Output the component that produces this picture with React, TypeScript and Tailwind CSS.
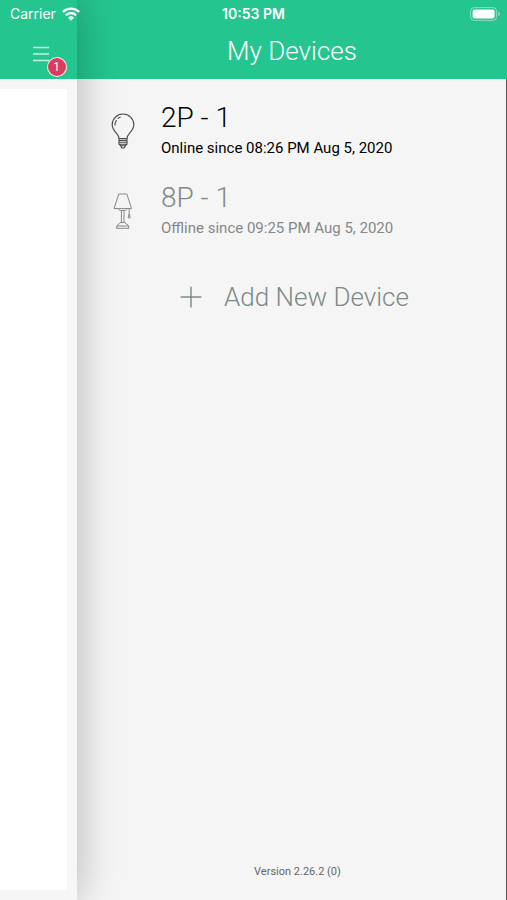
import { Plus } from "lucide-react";

type Device = {
  name: string;
  status: string;
  online: boolean;
  icon: "bulb" | "lamp";
};

const devices: Device[] = [
  { name: "2P - 1", status: "Online since 08:26 PM Aug 5, 2020", online: true, icon: "bulb" },
  { name: "8P - 1", status: "Offline since 09:25 PM Aug 5, 2020", online: false, icon: "lamp" },
];

function BulbIcon() {
  return (
    <svg width="24" height="36" viewBox="0 0 24 36" fill="none" stroke="#4a4a4a" strokeWidth="1.1" aria-hidden="true">
      <path d="M8 25.5C8 20.5 1.2 18.5 1.2 11.8A10.8 10.8 0 0 1 22.8 11.8C22.8 18.5 16 20.5 16 25.5Z" />
      <path d="M4 12.5A8.2 8.2 0 0 1 5.6 7M6.8 5.6A8 8 0 0 1 9.6 4" />
      <path d="M8 25.5v5.7l1.8 1.5h4.4l1.8-1.5v-5.7M8 27.4h8M8 29.3h8M8.4 31.2h7.2" />
      <path d="M10 32.7v1l1 1.3h2l1-1.3v-1" />
    </svg>
  );
}

function LampIcon() {
  return (
    <svg width="24" height="36" viewBox="0 0 24 36" fill="none" stroke="currentColor" strokeWidth="1" strokeLinejoin="round" aria-hidden="true">
      <path d="M7.8 1h8l4.8 14.6H3Z" />
      <path d="M7.5 15.6c.4 1.5 1.5 1.9 2.7 1.9h3c1.2 0 2.3-.4 2.7-1.9" />
      <path d="M10.4 17.5v12M13 17.5v12M9.2 29.5h5" />
      <path d="M9.2 29.5c0 2-3.2 1.4-3.2 3.5h11.4c0-2.1-3.2-1.5-3.2-3.5M6 33l-.6 2.3H18l-.6-2.3" />
      <path d="M18.2 15.6v5.8M17.2 24.8l.6-3.4h.8l.6 3.4Z" />
    </svg>
  );
}

function WifiIcon() {
  return (
    <svg width="18" height="14" viewBox="0 0 18 14" fill="none" stroke="currentColor" strokeWidth="2.3" aria-hidden="true">
      <path d="M0.9 5A11.5 11.5 0 0 1 17.1 5" />
      <path d="M3.9 8.2A7.2 7.2 0 0 1 14.1 8.2" />
      <path d="M9 13.8L6.1 10.8A4.1 4.1 0 0 1 11.9 10.8Z" fill="currentColor" stroke="none" />
    </svg>
  );
}

function BatteryIcon() {
  return (
    <svg width="31" height="14" viewBox="0 0 31 14" fill="none" aria-hidden="true">
      <rect x="0.6" y="0.6" width="26" height="12.8" rx="3.6" stroke="white" strokeOpacity="0.45" />
      <rect x="2.6" y="2.6" width="22" height="8.8" rx="1.8" fill="white" />
      <path d="M28.2 4.8v4.4c.9-.4 1.6-1.2 1.6-2.2s-.7-1.8-1.6-2.2Z" fill="white" fillOpacity="0.5" />
    </svg>
  );
}

function StatusBar() {
  return (
    <div className="absolute inset-x-0 top-0 z-20 grid h-7 grid-cols-3 items-center px-1.5 font-['Inter',sans-serif] text-sm text-white">
      <div className="flex items-center gap-1.5 pl-1">
        <span>Carrier</span>
        <WifiIcon />
      </div>
      <span className="text-center font-semibold">10:53 PM</span>
      <div className="flex justify-end">
        <BatteryIcon />
      </div>
    </div>
  );
}

function MainPanel() {
  return (
    <section className="z-10 flex w-[77px] shrink-0 flex-col bg-[#f6f6f6] shadow-[0_0_44px_rgba(0,0,0,0.28)]">
      <header className="flex h-[79px] items-end justify-center bg-[#25c58f] pb-4 pl-1">
        <button type="button" aria-label="Menu, 1 notification" className="relative text-white/75">
          <svg width="16" height="18" viewBox="0 0 16 18" stroke="currentColor" strokeWidth="1.5" aria-hidden="true">
            <path d="M0 2.5h16M0 9h16M0 15.5h16" />
          </svg>
          <span className="absolute top-3 left-3.5 flex size-5 items-center justify-center rounded-full border border-white/90 bg-[#dc3c5c] text-xs text-white">
            1
          </span>
        </button>
      </header>
      <div className="my-2.5 mr-2.5 flex-1 bg-white" />
    </section>
  );
}

function DeviceRow({ device }: { device: Device }) {
  return (
    <li>
      <button
        type="button"
        className={`flex h-20 w-full items-center gap-[26px] pl-[34px] text-left ${device.online ? "text-black" : "text-[#878787]"}`}
      >
        {device.icon === "bulb" ? <BulbIcon /> : <LampIcon />}
        <span className="flex flex-col pt-0.5">
          <span className="text-[28px] leading-8 font-light">{device.name}</span>
          <span className="text-[15px] leading-7">{device.status}</span>
        </span>
      </button>
    </li>
  );
}

export default function App() {
  return (
    <div className="relative flex min-h-screen overflow-hidden bg-[#f5f5f5] font-['Roboto',sans-serif]">
      <StatusBar />
      <MainPanel />
      <main className="flex min-w-0 flex-1 flex-col">
        <header className="flex h-[79px] items-end justify-center bg-[#25c58f] pb-3">
          <h1 className="text-[26px] leading-8 font-light text-white">My Devices</h1>
        </header>
        <div className="flex flex-1 flex-col border-r border-[#555555] pt-3">
          <ul>
            {devices.map((device) => (
              <DeviceRow key={device.name} device={device} />
            ))}
          </ul>
          <button
            type="button"
            className="mt-[22px] flex h-12 items-center justify-center gap-4 text-[26px] font-light text-[#7d8a86]"
          >
            <Plus size={34} strokeWidth={1} />
            Add New Device
          </button>
          <p className="mt-auto pb-5 pl-3 text-center text-[11px] leading-4 text-[#666666]">Version 2.26.2 (0)</p>
        </div>
      </main>
    </div>
  );
}
